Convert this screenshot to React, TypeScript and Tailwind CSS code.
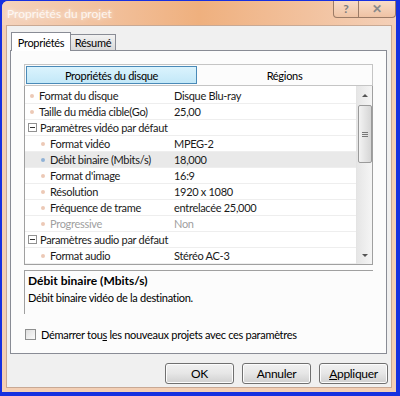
import React from 'react';

type Row = {
  kind: 'item' | 'category';
  level?: number;
  label: string;
  value?: string;
  selected?: boolean;
  disabled?: boolean;
};

const rows: Row[] = [
  { kind: 'item', level: 0, label: 'Format du disque', value: 'Disque Blu-ray' },
  { kind: 'item', level: 0, label: 'Taille du média cible(Go)', value: '25,00' },
  { kind: 'category', label: 'Paramètres vidéo par défaut' },
  { kind: 'item', level: 1, label: 'Format vidéo', value: 'MPEG-2' },
  { kind: 'item', level: 1, label: 'Débit binaire (Mbits/s)', value: '18,000', selected: true },
  { kind: 'item', level: 1, label: "Format d'image", value: '16:9' },
  { kind: 'item', level: 1, label: 'Résolution', value: '1920 x 1080' },
  { kind: 'item', level: 1, label: 'Fréquence de trame', value: 'entrelacée 25,000' },
  { kind: 'item', level: 1, label: 'Progressive', value: 'Non', disabled: true },
  { kind: 'category', label: 'Paramètres audio par défaut' },
  { kind: 'item', level: 1, label: 'Format audio', value: 'Stéréo AC-3' },
];

const font = { fontFamily: 'Lato, "Liberation Sans", sans-serif' };

const ExpandBox = () => (
  <span className="w-[9px] h-[9px] border border-[#919191] bg-white flex items-center justify-center shrink-0">
    <span className="w-[5px] h-px bg-[#333]" />
  </span>
);

const PropertyRow: React.FC<{ row: Row }> = ({ row }) => {
  if (row.kind === 'category') {
    return (
      <div className="h-[16px] flex items-center pl-[3px] gap-[3px] border-b border-[#eeeeee] text-[#1a1a1a]">
        <ExpandBox />
        <span className="leading-none">{row.label}</span>
      </div>
    );
  }
  const indent = row.level === 1 ? 'pl-[16px]' : 'pl-[5px]';
  return (
    <div className={`h-[16px] flex items-center border-b border-[#eeeeee] ${row.selected ? 'bg-[#e9e9e9]' : ''}`}>
      <div className={`w-[148px] flex items-center gap-[5px] shrink-0 ${indent}`}>
        <span
          className={`w-[4px] h-[4px] rounded-full shrink-0 ${row.selected ? 'bg-[#8fb1d6]' : 'bg-[#ecc9b6]'}`}
        />
        <span className={`leading-none whitespace-nowrap ${row.disabled ? 'text-[#a0a0a0]' : 'text-[#1a1a1a]'}`}>
          {row.label}
        </span>
      </div>
      <div className={`pl-[1px] leading-none whitespace-nowrap ${row.disabled ? 'text-[#a0a0a0]' : 'text-[#1a1a1a]'}`}>
        {row.value}
      </div>
    </div>
  );
};

const Scrollbar = () => (
  <div className="w-[16px] bg-gradient-to-r from-[#e6e6e6] to-[#f5f5f5] border-l border-[#e4e4e4] flex flex-col items-center">
    <div className="h-[19px] flex items-center justify-center">
      <span className="w-0 h-0 border-l-[3px] border-r-[3px] border-b-[3px] border-l-transparent border-r-transparent border-b-[#555]" />
    </div>
    <div className="w-[14px] h-[58px] rounded-[2px] border border-[#9a9a9a] bg-gradient-to-r from-[#f3f3f3] via-[#e4e4e4] to-[#d6d6d6] flex flex-col items-center justify-center gap-[1px]">
      <span className="w-[6px] h-px bg-[#777]" />
      <span className="w-[6px] h-px bg-[#777]" />
      <span className="w-[6px] h-px bg-[#777]" />
    </div>
    <div className="flex-1" />
    <div className="h-[17px] flex items-center justify-center">
      <span className="w-0 h-0 border-l-[3px] border-r-[3px] border-t-[3px] border-l-transparent border-r-transparent border-t-[#555]" />
    </div>
  </div>
);

const DialogButton: React.FC<{ children: React.ReactNode }> = ({ children }) => (
  <button className="w-[69px] h-[21px] rounded-[3px] border border-[#707070] bg-gradient-to-b from-[#f2f2f2] via-[#e6e6e6] to-[#d0d0d0] text-[12px] text-black leading-none shadow-[inset_0_0_0_1px_#fcfcfc]">
    {children}
  </button>
);

export default function App() {
  return (
    <div className="w-[400px] h-[396px] bg-[#1630e0] pt-[1px] pl-[2px] pr-[4px] pb-[4px]" style={font}>
      <div className="w-full h-full rounded-t-[6px] bg-[#f3cfb5] flex flex-col">
        {/* Title bar */}
        <div className="h-[24px] relative rounded-t-[6px] bg-gradient-to-r from-[#f4d3bd] via-[#efb07e] to-[#f4d0b8] flex items-center pl-[5px]">
          <span className="text-[12px] text-white/80 leading-none mt-[2px] [text-shadow:0_0_4px_rgba(255,255,255,0.8)]">
            Propriétés du projet
          </span>
          <div className="absolute right-[0px] top-0 h-[17px] w-[63px] flex border border-t-0 border-[#9b7b66] rounded-b-[4px] overflow-hidden bg-gradient-to-b from-[#f8dcc8] to-[#efc3a4]">
            <div className="w-[25px] flex items-center justify-center border-r border-[#9b7b66] text-[12px] font-bold text-[#7d7d7d] leading-none">
              ?
            </div>
            <div className="flex-1 flex items-center justify-center text-[12px] font-bold text-[#8a8a8a] leading-none">
              ✕
            </div>
          </div>
        </div>

        {/* Content */}
        <div className="flex-1 mx-[4px] mb-[4px] bg-[#f0f0f0] border border-[#c9a994] flex flex-col text-[11px] tracking-[-0.3px] px-[3px]">
          {/* Tabs */}
          <div className="flex items-end h-[24px] pl-[1px]">
            <div className="h-[19px] w-[60px] bg-white border border-b-0 border-[#898c95] flex items-center justify-center relative top-[1px] z-10 leading-none">
              Propriétés
            </div>
            <div className="h-[16px] w-[45px] bg-gradient-to-b from-[#f2f2f2] to-[#d9d9d9] border border-l-0 border-b-0 border-[#898c95] flex items-center justify-center leading-none">
              Résumé
            </div>
          </div>

          {/* Tab panel */}
          <div className="w-[377px] h-[304px] bg-[#fcfcfc] border border-[#898c95] p-[13px] flex flex-col">
            {/* Segmented header */}
            <div className="h-[24px] border border-[#c5c5c5] flex">
              <div className="w-[171px] my-[1px] ml-[1px] border border-[#4a8ab8] bg-gradient-to-b from-[#dbf3fd] to-[#c3e8f8] flex items-center justify-center leading-none">
                Propriétés du disque
              </div>
              <div className="flex-1 flex items-center justify-center leading-none">Régions</div>
            </div>

            {/* Property grid */}
            <div className="h-[179px] border border-t-0 border-[#a0a0a0] bg-white flex">
              <div className="flex-1 pt-[2px]">
                {rows.map((r, i) => (
                  <PropertyRow key={i} row={r} />
                ))}
              </div>
              <Scrollbar />
            </div>

            {/* Description */}
            <div className="mt-[5px] h-[48px] border-t border-l border-[#a0a0a0] pl-[3px] pt-[2px]">
              <div className="font-bold text-[12px] tracking-normal leading-[16px]">Débit binaire (Mbits/s)</div>
              <div className="leading-[16px] mt-[1px]">Débit binaire vidéo de la destination.</div>
            </div>

            {/* Checkbox */}
            <div className="mt-[15px] flex items-center gap-[5px] pl-[1px]">
              <span className="w-[11px] h-[11px] border border-[#8e8f8f] bg-gradient-to-br from-[#dedede] to-[#fbfbfb] shrink-0" />
              <span className="leading-none">
                Démarrer tou<span className="underline">s</span> les nouveaux projets avec ces paramètres
              </span>
            </div>
          </div>

          {/* Buttons */}
          <div className="flex justify-end gap-[8px] mt-[9px] pr-[0px]">
            <DialogButton>OK</DialogButton>
            <DialogButton>Annuler</DialogButton>
            <DialogButton>
              <span className="underline">A</span>ppliquer
            </DialogButton>
          </div>
        </div>
      </div>
    </div>
  );
}
